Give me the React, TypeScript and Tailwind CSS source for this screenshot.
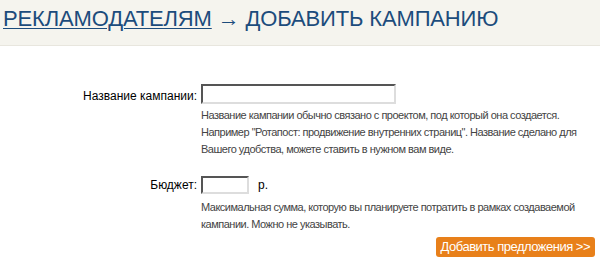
export default function App() {
  const font = { fontFamily: "'Liberation Sans', Arial, sans-serif" };
  return (
    <div className="h-[271px] w-[600px] overflow-hidden bg-white" style={font}>
      <div className="h-[46px] border-b border-[#e8e6de] bg-[#f5f4ee] pl-[3px] pt-[5px]">
        <h1 className="text-[22px] leading-[28px] tracking-[-0.15px] text-[#1c4c7c]">
          <a href="#" className="underline decoration-1 underline-offset-2">
            РЕКЛАМОДАТЕЛЯМ
          </a>{" "}
          → ДОБАВИТЬ КАМПАНИЮ
        </h1>
      </div>

      <div className="pt-[38px]">
        <div className="grid grid-cols-[197px_1fr] gap-x-[4px]">
          <label className="pt-[2px] text-right text-[12px] leading-[20px] text-black">
            Название кампании:
          </label>
          <div>
            <input
              type="text"
              className="block h-[20px] w-[195px] border-2 border-t-[#555] border-l-[#555] border-b-[#ddd] border-r-[#ddd] bg-white"
            />
            <p className="mt-[3px] whitespace-nowrap text-[11px] leading-[17px] tracking-[-0.5px] text-[#444]">
              Название кампании обычно связано с проектом, под который она создается.
              <br />
              Например "Ротапост: продвижение внутренних страниц". Название сделано для
              <br />
              Вашего удобства, можете ставить в нужном вам виде.
            </p>
          </div>

          <label className="mt-[18px] text-right text-[12px] leading-[18px] text-black">
            Бюджет:
          </label>
          <div className="mt-[18px]">
            <div className="flex items-center gap-[9px]">
              <input
                type="text"
                className="block h-[18px] w-[48px] border-2 border-t-[#555] border-l-[#555] border-b-[#ddd] border-r-[#ddd] bg-white"
              />
              <span className="text-[12px] text-black">р.</span>
            </div>
            <p className="mt-[5px] whitespace-nowrap text-[11px] leading-[17px] tracking-[-0.5px] text-[#444]">
              Максимальная сумма, которую вы планируете потратить в рамках создаваемой
              <br />
              кампании. Можно не указывать.
            </p>
          </div>
        </div>

        <div className="mt-[4px] flex justify-end pr-[5px]">
          <button
            type="button"
            className="h-[20px] rounded-[3px] bg-[#e8801a] px-[5px] text-[13px] leading-[20px] tracking-[-0.5px] text-white"
          >
            Добавить предложения &gt;&gt;
          </button>
        </div>
      </div>
    </div>
  );
}
